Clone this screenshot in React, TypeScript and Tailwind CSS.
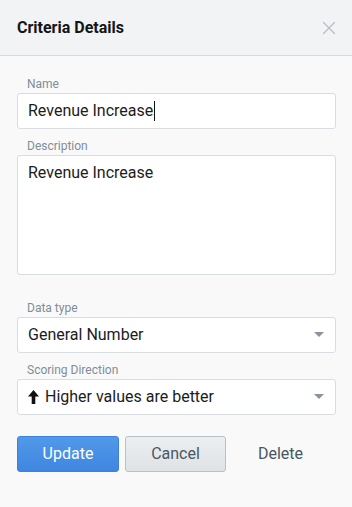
import { X } from "lucide-react";

function Caret() {
  return (
    <svg width="10" height="6" viewBox="0 0 10 6" className="shrink-0">
      <path d="M0 0 L10 0 L5 5 Z" fill="#8a949e" />
    </svg>
  );
}

function UpArrow() {
  return (
    <svg width="11" height="14" viewBox="0 0 11 14" className="mr-[6px]">
      <path d="M5.5 0 L11 6.5 L7.3 6.5 L7.3 14 L3.7 14 L3.7 6.5 L0 6.5 Z" fill="#111" />
    </svg>
  );
}

function Label({ children }: { children: React.ReactNode }) {
  return <div className="text-[12px] leading-[14px] text-[#7f8d9a] pl-[10px] mb-[2px]">{children}</div>;
}

function Select({ children }: { children: React.ReactNode }) {
  return (
    <div className="flex items-center justify-between h-[36px] bg-white border border-[#d8dde2] rounded-[3px] pl-[10px] pr-[11px] text-[16px] text-[#1c1c1c]">
      <span className="flex items-center">{children}</span>
      <Caret />
    </div>
  );
}

export default function App() {
  return (
    <div className="w-[352px] h-[507px] bg-[#f9f9f9] font-['Roboto',sans-serif] flex flex-col">
      {/* Header */}
      <div className="h-[56px] bg-[#f2f3f5] border-b border-[#d6dadd] flex items-center justify-between pl-[17px] pr-[12px] shrink-0">
        <h1 className="text-[16px] font-bold text-[#151515]">Criteria Details</h1>
        <X size={22} strokeWidth={1.4} className="text-[#b6bec6]" />
      </div>

      <div className="pl-[17px] pr-[16px] pt-[21px] flex flex-col">
        <Label>Name</Label>
        <div className="h-[36px] bg-white border border-[#d8dde2] rounded-[3px] flex items-center pl-[10px] text-[16px] text-[#1c1c1c]">
          Revenue Increase<span className="inline-block w-[1px] h-[20px] bg-[#111] ml-[1px]" />
        </div>

        <div className="mt-[10px]">
          <Label>Description</Label>
        </div>
        <div className="h-[120px] bg-white border border-[#d8dde2] rounded-[3px] pl-[10px] pt-[7px] text-[16px] leading-[20px] text-[#1c1c1c]">
          Revenue Increase
        </div>

        <div className="mt-[26px]">
          <Label>Data type</Label>
        </div>
        <Select>General Number</Select>

        <div className="mt-[10px]">
          <Label>Scoring Direction</Label>
        </div>
        <Select>
          <UpArrow />
          Higher values are better
        </Select>

        <div className="flex items-center gap-[6px] mt-[21px]">
          <button className="w-[102px] h-[36px] rounded-[3px] bg-gradient-to-b from-[#5199ea] to-[#3f86e0] border border-[#3d82d9] text-white text-[16px]">
            Update
          </button>
          <button className="w-[101px] h-[36px] rounded-[3px] bg-gradient-to-b from-[#eceef0] to-[#dfe3e6] border border-[#b9c1c8] text-[#4a5661] text-[16px]">
            Cancel
          </button>
          <button className="w-[97px] h-[36px] text-[#4a5661] text-[16px]">Delete</button>
        </div>
      </div>
    </div>
  );
}
